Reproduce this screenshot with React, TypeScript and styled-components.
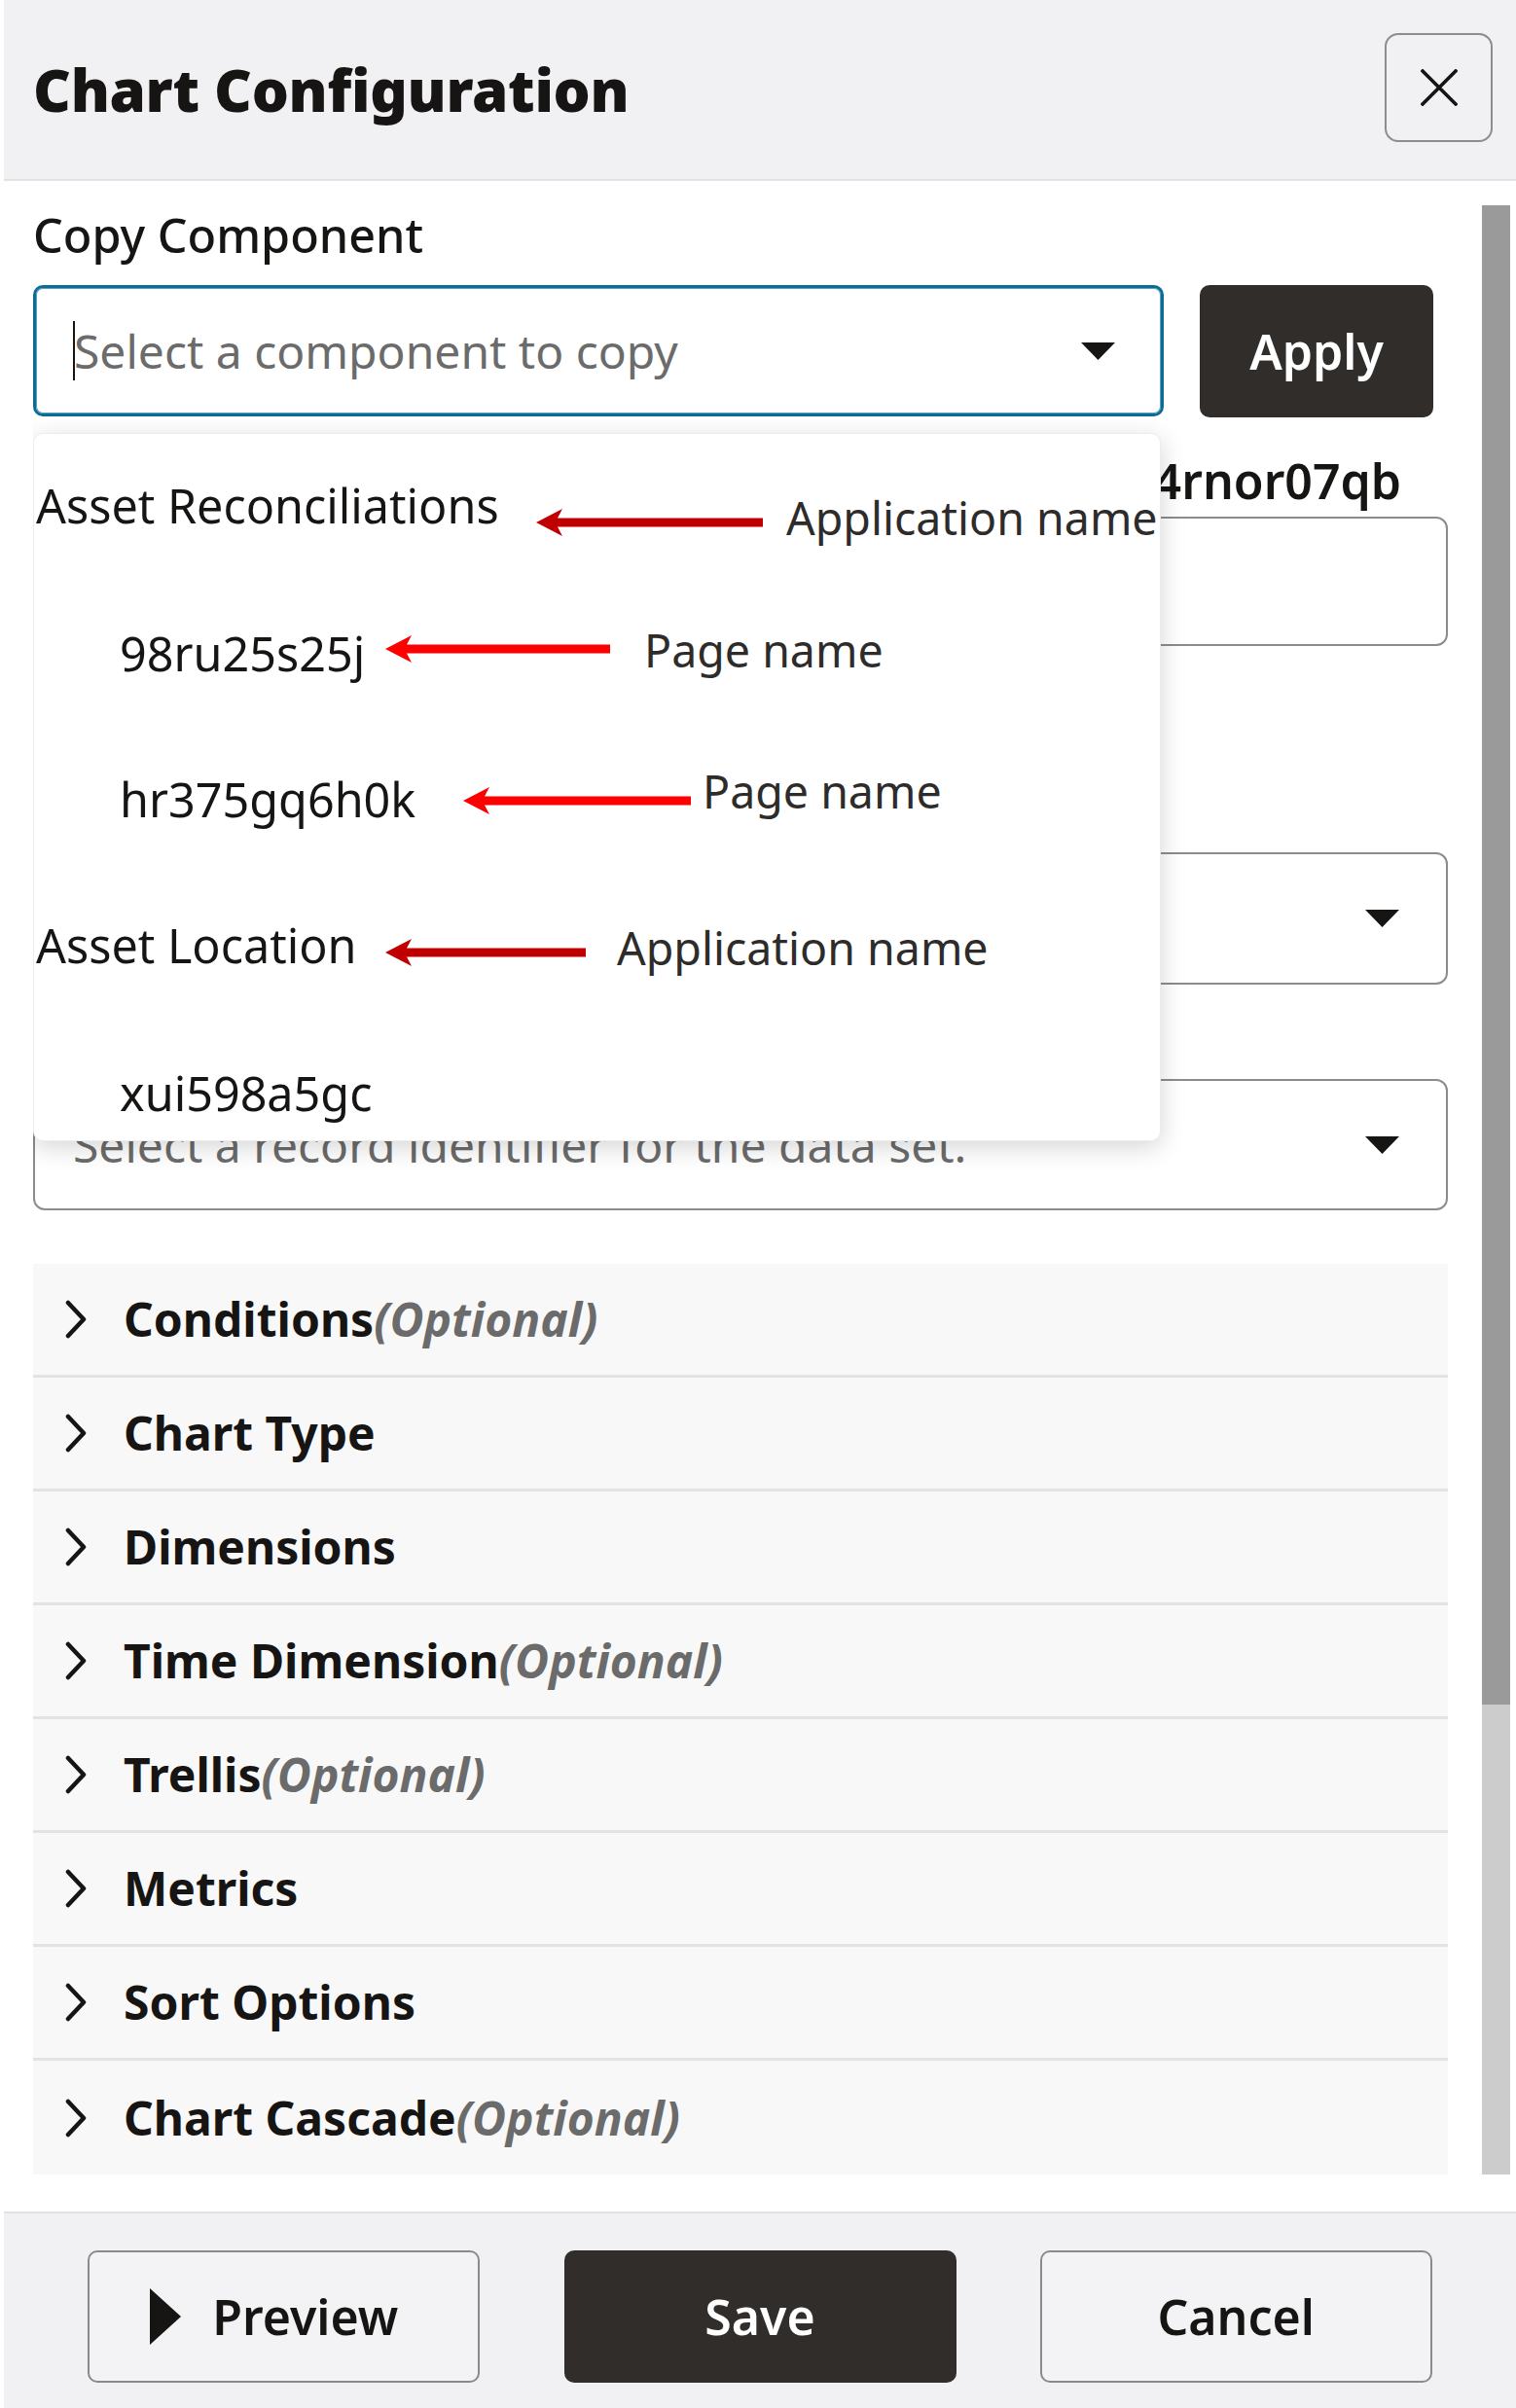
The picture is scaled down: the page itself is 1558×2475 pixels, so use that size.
import React from "react";
import styled, { createGlobalStyle } from "styled-components";

const GlobalStyle = createGlobalStyle`
  html, body { margin: 0; padding: 0; background: #ffffff; }
  body { font-family: "Noto Sans", "Open Sans", sans-serif; color: #161513; }
  * { box-sizing: border-box; }
`;

const Dialog = styled.div`
  margin-left: 4px;
  width: 1554px;
  height: 2475px;
  display: flex;
  flex-direction: column;
  background: #ffffff;
`;

const Header = styled.header`
  flex: none;
  height: 186px;
  background: #f1f1f3;
  border-bottom: 2px solid #e2e2e4;
  display: flex;
  align-items: center;
  justify-content: space-between;
  padding: 0 24px 0 30px;
`;

const Title = styled.h1`
  margin: 0;
  font-size: 60px;
  font-weight: 900;
  line-height: 1.2;
  letter-spacing: -0.3px;
  color: #161513;
`;

const IconButton = styled.button`
  width: 111px;
  height: 112px;
  margin-top: -4px;
  border: 2px solid #8d8d8d;
  border-radius: 14px;
  background: transparent;
  display: flex;
  align-items: center;
  justify-content: center;
  padding: 0;
`;

const Body = styled.div`
  flex: 1;
  display: flex;
  padding: 25px 6px 38px 30px;
  min-height: 0;
`;

const Content = styled.div`
  position: relative;
  flex: 1;
  height: 2024px;
  overflow: hidden;
  display: flex;
  flex-direction: column;
  padding-top: 2px;
`;

const Scrollbar = styled.div`
  flex: none;
  width: 29px;
  margin-left: 35px;
  height: 2024px;
  background: #cccccc;
  display: flex;
  flex-direction: column;
`;

const Thumb = styled.div`
  height: 1541px;
  background: #9a9a9a;
`;

const SectionLabel = styled.div<{ $top?: number; $weight?: number; $size?: number }>`
  margin-top: ${(p) => p.$top ?? 0}px;
  font-size: ${(p) => p.$size ?? 48.5}px;
  font-weight: ${(p) => p.$weight ?? 500};
  line-height: 60px;
  white-space: nowrap;
  color: #161513;
`;

const CopyRow = styled.div`
  display: flex;
  gap: 37px;
  margin-top: 22px;
  margin-right: 15px;
`;

const FocusSelect = styled.div`
  flex: 1;
  height: 135px;
  border: 3px solid #0b6c97;
  box-shadow: inset 0 0 0 1px #5d9dbf;
  border-radius: 10px;
  display: flex;
  align-items: center;
  padding: 0 47px 0 38px;
  background: #ffffff;
`;

const Caret = styled.span`
  width: 2px;
  height: 61px;
  background: #161513;
  margin-right: -1px;
  flex: none;
`;

const Placeholder = styled.span`
  flex: 1;
  min-width: 0;
  font-size: 48px;
  line-height: 60px;
  color: #6b6b6b;
  white-space: nowrap;
`;

const DarkButton = styled.button<{ $w: number }>`
  width: ${(p) => p.$w}px;
  height: 136px;
  border: none;
  border-radius: 10px;
  background: #312d2a;
  color: #ffffff;
  font-family: inherit;
  font-size: 50px;
  font-weight: 600;
  flex: none;
`;

const Field = styled.div<{ $top: number; $h: number }>`
  margin-top: ${(p) => p.$top}px;
  height: ${(p) => p.$h}px;
  border: 2px solid #8c8c8c;
  border-radius: 12px;
  display: flex;
  align-items: center;
  padding: 0 48px 0 39px;
  background: #ffffff;
`;

const Accordion = styled.div`
  margin-top: 55px;
  display: flex;
  flex-direction: column;
`;

const AccordionItem = styled.div`
  flex: none;
  height: 117px;
  background: #f8f8f8;
  border-bottom: 3px solid #e3e3e3;
  display: flex;
  align-items: center;
  gap: 37px;
  padding-left: 32px;
  &:last-child {
    border-bottom: none;
  }
`;

const ItemLabel = styled.span`
  font-size: 48px;
  font-weight: 700;
  line-height: 60px;
  color: #161513;
  white-space: nowrap;
`;

const Optional = styled.span`
  font-style: italic;
  color: #6b6b6b;
`;

const Popup = styled.div`
  position: absolute;
  left: 0;
  top: 234px;
  width: 1159px;
  height: 728px;
  background: #ffffff;
  border: 1px solid #ececec;
  border-radius: 10px;
  box-shadow: 0 6px 26px rgba(0, 0, 0, 0.17);
`;

const List = styled.div`
  height: 100%;
  overflow: hidden;
  border-radius: 10px;
  display: flex;
  flex-direction: column;
`;

const Option = styled.div<{ $indent: number; $shift?: number }>`
  flex: none;
  height: 150px;
  display: flex;
  align-items: center;
  padding-left: ${(p) => p.$indent}px;
  font-size: 48.5px;
  line-height: 60px;
  color: #161513;
  white-space: nowrap;
  & > span {
    transform: translateY(${(p) => p.$shift ?? 0}px);
  }
`;

const ArrowSvg = styled.svg<{ $x: number; $y: number }>`
  position: absolute;
  left: ${(p) => p.$x}px;
  top: ${(p) => p.$y}px;
`;

const Note = styled.div<{ $x: number; $y: number }>`
  position: absolute;
  left: ${(p) => p.$x}px;
  top: ${(p) => p.$y}px;
  font-size: 46.5px;
  line-height: 56px;
  color: #2e2c2a;
  white-space: nowrap;
`;

const Footer = styled.footer`
  flex: none;
  height: 202px;
  background: #f1f1f3;
  border-top: 2px solid #e2e2e4;
  display: flex;
  align-items: flex-start;
  justify-content: space-evenly;
  padding-top: 38px;
`;

const OutlineButton = styled.button<{ $padRight?: number }>`
  width: 403px;
  height: 136px;
  border: 2px solid #8a8a8a;
  border-radius: 10px;
  background: #f3f3f5;
  color: #161513;
  font-family: inherit;
  font-size: 50px;
  font-weight: 600;
  display: flex;
  align-items: center;
  justify-content: center;
  gap: 32px;
  padding: 0 ${(p) => p.$padRight ?? 0}px 0 0;
`;

const Triangle = () => (
  <svg width="35" height="18" viewBox="0 0 35 18">
    <polygon points="0,0 35,0 17.5,18" fill="#161513" />
  </svg>
);

const Chevron = () => (
  <svg width="24" height="40" viewBox="0 0 24 40">
    <polyline points="4,3 20,20 4,37" fill="none" stroke="#161513" strokeWidth="4.5" strokeLinecap="round" strokeLinejoin="round" />
  </svg>
);

const Arrow = ({ x, y, w, color }: { x: number; y: number; w: number; color: string }) => (
  <ArrowSvg $x={x} $y={y} width={w} height={28} viewBox={`0 0 ${w} 28`}>
    <polygon points={`0,14 27,0 22,9.5 ${w},9.5 ${w},18.5 22,18.5 27,28`} fill={color} />
  </ArrowSvg>
);

const sections: { label: string; optional?: boolean }[] = [
  { label: "Conditions", optional: true },
  { label: "Chart Type" },
  { label: "Dimensions" },
  { label: "Time Dimension", optional: true },
  { label: "Trellis", optional: true },
  { label: "Metrics" },
  { label: "Sort Options" },
  { label: "Chart Cascade", optional: true },
];

const options: { text: string; indent: number; shift?: number }[] = [
  { text: "Asset Reconciliations", indent: 2, shift: -2 },
  { text: "98ru25s25j", indent: 88 },
  { text: "hr375gq6h0k", indent: 88 },
  { text: "Asset Location", indent: 2 },
  { text: "xui598a5gc", indent: 88, shift: 2 },
];

const DARK_RED = "#c00000";
const RED = "#ff0000";

export default function App() {
  return (
    <>
      <GlobalStyle />
      <Dialog>
        <Header>
          <Title>Chart Configuration</Title>
          <IconButton aria-label="Close">
            <svg width="38" height="38" viewBox="0 0 38 38">
              <path d="M2 2 L36 36 M36 2 L2 36" stroke="#161513" strokeWidth="3.6" strokeLinecap="square" />
            </svg>
          </IconButton>
        </Header>
        <Body>
          <Content>
            <SectionLabel $top={-2}>Copy Component</SectionLabel>
            <CopyRow>
              <FocusSelect>
                <Caret />
                <Placeholder>Select a component to copy</Placeholder>
                <Triangle />
              </FocusSelect>
              <DarkButton $w={240}>Apply</DarkButton>
            </CopyRow>
            <SectionLabel $top={35} $weight={600} $size={50}>
              {"Component Name: Asset Reconciliations Chart \u200A4rnor07qb"}
            </SectionLabel>
            <Field $top={7} $h={133} />
            <SectionLabel $top={145}>Data Set</SectionLabel>
            <Field $top={7} $h={136}>
              <Placeholder />
              <Triangle />
            </Field>
            <SectionLabel $top={30}>Record Identifier</SectionLabel>
            <Field $top={7} $h={135}>
              <Placeholder>Select a record identifier for the data set.</Placeholder>
              <Triangle />
            </Field>
            <Accordion>
              {sections.map((s) => (
                <AccordionItem key={s.label}>
                  <Chevron />
                  <ItemLabel>
                    {s.label}
                    {s.optional && <Optional>(Optional)</Optional>}
                  </ItemLabel>
                </AccordionItem>
              ))}
            </Accordion>
            <Popup>
              <List>
                {options.map((o) => (
                  <Option key={o.text} $indent={o.indent} $shift={o.shift}>
                    <span>{o.text}</span>
                  </Option>
                ))}
              </List>
              <Arrow x={516} y={77} w={233} color={DARK_RED} />
              <Note $x={773} $y={58}>Application name</Note>
              <Arrow x={361} y={207} w={231} color={RED} />
              <Note $x={627} $y={194}>Page name</Note>
              <Arrow x={441} y={363} w={234} color={RED} />
              <Note $x={687} $y={339}>Page name</Note>
              <Arrow x={361} y={519} w={206} color={DARK_RED} />
              <Note $x={599} $y={500}>Application name</Note>
            </Popup>
          </Content>
          <Scrollbar>
            <Thumb />
          </Scrollbar>
        </Body>
        <Footer>
          <OutlineButton $padRight={20}>
            <svg width="32" height="58" viewBox="0 0 32 58">
              <polygon points="0,0 32,29 0,58" fill="#161513" />
            </svg>
            Preview
          </OutlineButton>
          <DarkButton $w={403}>Save</DarkButton>
          <OutlineButton>Cancel</OutlineButton>
        </Footer>
      </Dialog>
    </>
  );
}
